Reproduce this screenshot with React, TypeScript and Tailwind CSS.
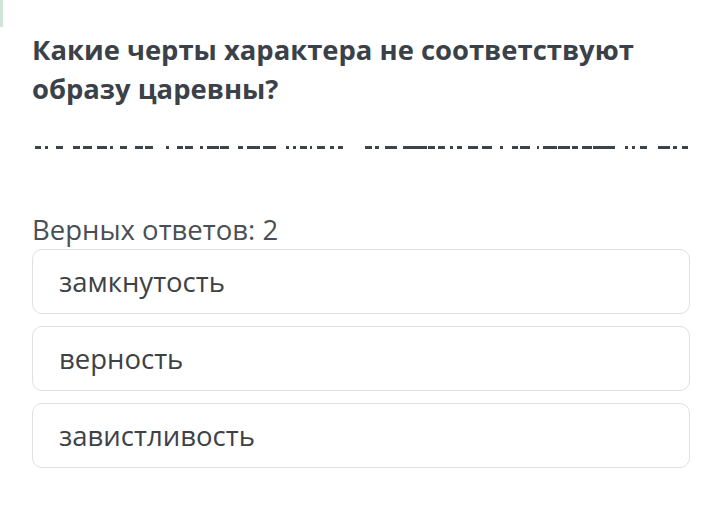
import React from 'react';

// скрытый текст в виде полосок (x, width)
const dashes: [number, number][] = [
  [35, 6], [45, 3], [56, 7], [73, 7], [83, 9], [97, 10], [110, 3], [120, 7],
  [135, 8], [145, 8], [166, 3], [177, 6], [185, 8], [200, 3], [207, 12], [220, 9],
  [238, 5], [247, 13], [263, 13], [286, 3], [293, 3], [300, 7], [310, 2], [317, 8],
  [330, 4], [338, 5], [365, 7], [375, 4], [385, 12], [403, 14], [417, 10], [428, 7],
  [438, 7], [450, 3], [457, 5], [468, 10], [482, 10], [500, 3], [512, 6], [520, 10],
  [537, 2], [543, 14], [558, 12], [572, 6], [582, 10], [593, 22], [625, 3], [632, 3],
  [640, 7], [658, 12], [673, 4], [682, 6],
];

const answers = ['замкнутость', 'верность', 'завистливость'];

const App = () => {
  return (
    <div className="relative w-[720px] h-[514px] bg-white overflow-hidden font-['Open_Sans','Noto_Sans',sans-serif]">
      <div className="absolute left-0 top-0 w-[3px] h-[27px] bg-[#cfe5d6]" />
      <div className="pl-[32px] pr-[20px] pt-[30px]">
        <h1 className="text-[27.4px] leading-[39px] font-bold text-[#3b4149]">
          Какие черты характера не соответствуют образу царевны?
        </h1>
      </div>

      <svg width="720" height="4" className="block mt-[38px]">
        {dashes.map(([x, w], i) => (
          <rect key={i} x={x} y={0} width={w} height={3} fill="#3e4349" />
        ))}
      </svg>

      <div className="px-[32px] pt-[64px]">
        <p className="text-[27.5px] leading-[32px] text-[#4a4f55]">Верных ответов: 2</p>
        <div className="flex flex-col gap-[12px] mt-[3px] w-[658px]">
          {answers.map((a) => (
            <div
              key={a}
              className="h-[65px] flex items-center pl-[26px] border border-[#dde2df] rounded-[10px] bg-white text-[27.5px] text-[#3d4247]"
            >
              {a}
            </div>
          ))}
        </div>
      </div>
    </div>
  );
};

export default App;
